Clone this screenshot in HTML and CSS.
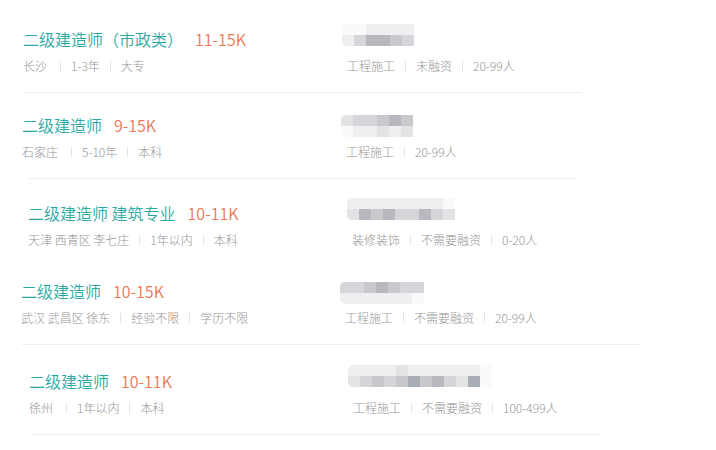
FILE: index.html
```html
<!DOCTYPE html>
<html lang="zh-CN">
<head>
<meta charset="utf-8">
<title>职位列表</title>
<link rel="stylesheet" href="styles.css">
</head>
<body>
<main class="list">
  <section class="card card-1">
    <div class="card-body">
      <div class="title"><span class="name">二级建造师（市政类）</span><span class="salary">11-15K</span></div>
      <div class="blur blur-6">
        <span class="s0"></span><span class="s0"></span><span class="s1"></span><span class="s1"></span><span class="s1"></span><span class="s1"></span>
        <span class="s1"></span><span class="s3"></span><span class="s5"></span><span class="s5"></span><span class="s4"></span><span class="s3"></span>
      </div>
      <div class="meta"><span class="wide">长沙</span><i class="sep"></i><span>1-3年</span><i class="sep"></i><span>大专</span></div>
      <div class="meta meta-right"><span>工程施工</span><i class="sep"></i><span>未融资</span><i class="sep"></i><span>20-99人</span></div>
    </div>
    <div class="rule"></div>
  </section>

  <section class="card card-2">
    <div class="card-body">
      <div class="title"><span class="name">二级建造师</span><span class="salary">9-15K</span></div>
      <div class="blur blur-6">
        <span class="s2"></span><span class="s3"></span><span class="s3"></span><span class="s4"></span><span class="s5"></span><span class="s4"></span>
        <span class="s0"></span><span class="s1"></span><span class="s1"></span><span class="s2"></span><span class="s1"></span><span class="s2"></span>
      </div>
      <div class="meta"><span class="wide">石家庄</span><i class="sep"></i><span>5-10年</span><i class="sep"></i><span>本科</span></div>
      <div class="meta meta-right"><span>工程施工</span><i class="sep"></i><span>20-99人</span></div>
    </div>
    <div class="rule"></div>
  </section>

  <section class="card card-3">
    <div class="card-body">
      <div class="title"><span class="name">二级建造师 建筑专业</span><span class="salary">10-11K</span></div>
      <div class="blur blur-9">
        <span class="s1"></span><span class="s1"></span><span class="s1"></span><span class="s1"></span><span class="s1"></span><span class="s1"></span><span class="s1"></span><span class="s1"></span><span class="s0"></span>
        <span class="s2"></span><span class="s5"></span><span class="s4"></span><span class="s5"></span><span class="s3"></span><span class="s3"></span><span class="s5"></span><span class="s3"></span><span class="s2"></span>
      </div>
      <div class="meta"><span>天津 西青区 李七庄</span><i class="sep"></i><span>1年以内</span><i class="sep"></i><span>本科</span></div>
      <div class="meta meta-right"><span>装修装饰</span><i class="sep"></i><span>不需要融资</span><i class="sep"></i><span>0-20人</span></div>
    </div>
  </section>

  <section class="card card-4">
    <div class="card-body">
      <div class="title"><span class="name">二级建造师</span><span class="salary">10-15K</span></div>
      <div class="blur blur-7">
        <span class="s3"></span><span class="s3"></span><span class="s4"></span><span class="s5"></span><span class="s4"></span><span class="s3"></span><span class="s3"></span>
        <span class="s1"></span><span class="s1"></span><span class="s1"></span><span class="s1"></span><span class="s1"></span><span class="s1"></span><span class="s0"></span>
      </div>
      <div class="meta"><span>武汉 武昌区 徐东</span><i class="sep"></i><span>经验不限</span><i class="sep"></i><span>学历不限</span></div>
      <div class="meta meta-right"><span>工程施工</span><i class="sep"></i><span>不需要融资</span><i class="sep"></i><span>20-99人</span></div>
    </div>
    <div class="rule"></div>
  </section>

  <section class="card card-5">
    <div class="card-body">
      <div class="title"><span class="name">二级建造师</span><span class="salary">10-11K</span></div>
      <div class="blur blur-12">
        <span class="s1"></span><span class="s1"></span><span class="s1"></span><span class="s1"></span><span class="s2"></span><span class="s1"></span><span class="s1"></span><span class="s1"></span><span class="s1"></span><span class="s1"></span><span class="s1"></span><span class="s0"></span>
        <span class="s2"></span><span class="s3"></span><span class="s4"></span><span class="s3"></span><span class="s4"></span><span class="s6"></span><span class="s4"></span><span class="s5"></span><span class="s3"></span><span class="s2"></span><span class="s6"></span><span class="s0"></span>
      </div>
      <div class="meta"><span class="wide">徐州</span><i class="sep"></i><span>1年以内</span><i class="sep"></i><span>本科</span></div>
      <div class="meta meta-right"><span>工程施工</span><i class="sep"></i><span>不需要融资</span><i class="sep"></i><span>100-499人</span></div>
    </div>
    <div class="rule"></div>
  </section>
</main>
</body>
</html>
```

FILE: styles.css
```css
html, body {
  margin: 0;
  padding: 0;
  background: #ffffff;
}

body {
  font-family: "Noto Sans CJK SC", "Noto Sans", sans-serif;
  color: #999999;
}

.list {
  display: flex;
  flex-direction: column;
  padding-bottom: 15px;
}

.card-body {
  display: grid;
  grid-template-columns: 319px auto;
  grid-template-rows: 22px 16px;
  row-gap: 8px;
  align-items: start;
}

.title {
  grid-column: 1;
  grid-row: 1;
  display: flex;
  align-items: center;
  height: 22px;
  font-size: 16px;
  line-height: 22px;
  font-weight: 350;
  white-space: nowrap;
}

.name {
  color: #2aa9a2;
}

.salary {
  margin-left: 12px;
  color: #ec7753;
}

.meta {
  grid-column: 1;
  grid-row: 2;
  display: flex;
  align-items: center;
  height: 16px;
  font-size: 12px;
  line-height: 16px;
  font-weight: 300;
  color: #959595;
  white-space: nowrap;
}

.meta-right {
  grid-column: 2;
  padding-left: 5px;
}

.wide {
  padding-right: 3px;
}

.sep {
  display: block;
  width: 1px;
  height: 10px;
  margin: 0 10px;
  background: #e3e3e3;
}

.blur {
  grid-column: 2;
  grid-row: 1;
  display: grid;
  grid-auto-rows: 11px;
  border-radius: 5px;
  overflow: hidden;
  filter: blur(0.5px);
}

.blur-6 { grid-template-columns: repeat(6, 12px); }
.blur-7 { grid-template-columns: repeat(7, 12px); }
.blur-9 { grid-template-columns: repeat(9, 12px); }
.blur-12 { grid-template-columns: repeat(12, 12px); }

.s0 { background: #fafafa; }
.s1 { background: #eeeff0; }
.s2 { background: #e2e3e5; }
.s3 { background: #d4d6d9; }
.s4 { background: #c7c9cc; }
.s5 { background: #b7b9be; }
.s6 { background: #a8acb3; }

.rule {
  height: 1px;
  margin-top: 18px;
  background: #eeeeee;
}

/* per-card placement (collage offsets) */
.card-1 { margin-top: 28px; }
.card-1 .card-body { padding-left: 23px; }
.card-1 .blur { margin-top: -4px; }
.card-1 .rule { margin-left: 23px; width: 559px; }

.card-2 { margin-top: 21px; }
.card-2 .card-body { padding-left: 22px; }
.card-2 .blur { margin-top: 1px; }
.card-2 .rule { margin-left: 29px; width: 548px; }

.card-3 { margin-top: 23px; }
.card-3 .card-body { padding-left: 28px; }
.card-3 .blur { margin-top: -4px; }

.card-4 { margin-top: 32px; }
.card-4 .card-body { padding-left: 21px; }
.card-4 .blur { margin-top: 2px; }
.card-4 .rule { margin-left: 22px; width: 618px; }

.card-5 { margin-top: 25px; }
.card-5 .card-body { padding-left: 29px; }
.card-5 .blur { margin-top: -5px; }
.card-5 .rule { margin-left: 30px; width: 570px; }
```
